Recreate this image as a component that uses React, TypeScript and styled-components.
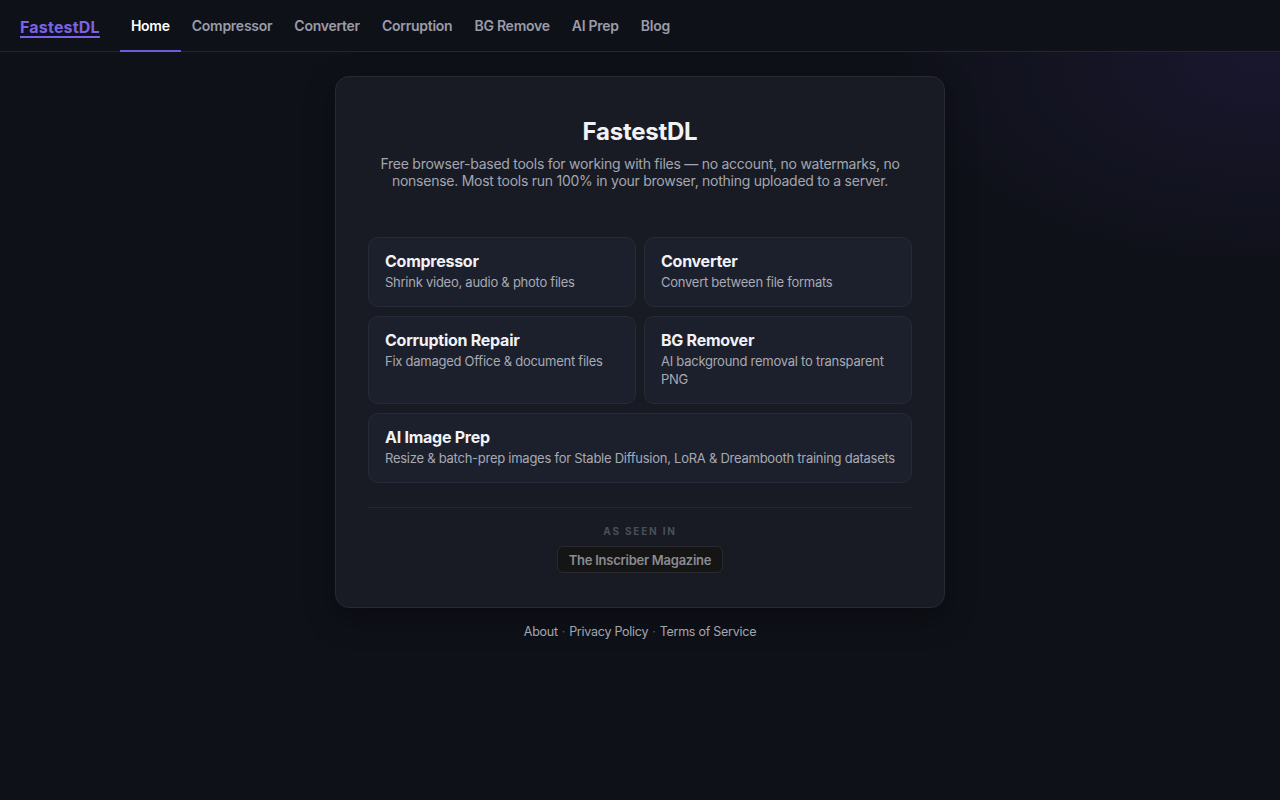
import styled, { createGlobalStyle } from "styled-components";

const GlobalStyle = createGlobalStyle`
  html, body {
    margin: 0;
    padding: 0;
    background: #0f1119;
  }

  body {
    font-family: Inter, "Noto Sans", "Liberation Sans", sans-serif;
    letter-spacing: -0.016em;
    color: #e8eaf0;
    -webkit-font-smoothing: antialiased;
  }

  * {
    box-sizing: border-box;
  }
`;

const tools = [
  { name: "Compressor", desc: "Shrink video, audio & photo files" },
  { name: "Converter", desc: "Convert between file formats" },
  { name: "Corruption Repair", desc: "Fix damaged Office & document files" },
  { name: "BG Remover", desc: "AI background removal to transparent PNG" },
  {
    name: "AI Image Prep",
    desc: "Resize & batch-prep images for Stable Diffusion, LoRA & Dreambooth training datasets",
    wide: true,
  },
];

const navLinks = ["Home", "Compressor", "Converter", "Corruption", "BG Remove", "AI Prep", "Blog"];

const App = () => {
  return (
    <Page>
      <GlobalStyle />
      <Nav>
        <Logo href="#">FastestDL</Logo>
        <NavList>
          {navLinks.map((link, idx) => (
            <NavLink key={link} href="#" $active={idx === 0}>
              {link}
            </NavLink>
          ))}
        </NavList>
      </Nav>

      <Main>
        <Card>
          <Header>
            <Title>FastestDL</Title>
            <Subtitle>
              Free browser-based tools for working with files — no account, no watermarks, no
              nonsense. Most tools run 100% in your browser, nothing uploaded to a server.
            </Subtitle>
          </Header>

          <ToolGrid>
            {tools.map((tool) => (
              <ToolTile key={tool.name} href="#" $wide={!!tool.wide}>
                <ToolName>{tool.name}</ToolName>
                <ToolDesc>{tool.desc}</ToolDesc>
              </ToolTile>
            ))}
          </ToolGrid>

          <Press>
            <PressLabel>As seen in</PressLabel>
            <PressBadge href="#">The Inscriber Magazine</PressBadge>
          </Press>
        </Card>

        <Footer>
          <FooterLink href="#">About</FooterLink>
          <Dot>·</Dot>
          <FooterLink href="#">Privacy Policy</FooterLink>
          <Dot>·</Dot>
          <FooterLink href="#">Terms of Service</FooterLink>
        </Footer>
      </Main>
    </Page>
  );
};

export default App;

const Page = styled.div`
  min-height: 800px;
  background:
    radial-gradient(ellipse 520px 300px at 1260px 60px, rgba(70, 50, 140, 0.18), transparent 70%),
    #0f1119;
`;

const Nav = styled.nav`
  height: 52px;
  display: flex;
  align-items: stretch;
  padding: 0 20px;
  gap: 20px;
  border-bottom: 1px solid #232633;
  background: #0f1119;
`;

const Logo = styled.a`
  display: flex;
  align-items: center;
  padding-top: 2px;
  font-size: 16px;
  font-weight: 700;
  color: #7b63e6;
  text-decoration: underline;
  text-underline-offset: 3px;
  text-decoration-thickness: 1.5px;
  letter-spacing: 0.2px;
`;

const NavList = styled.div`
  display: flex;
  align-items: stretch;
`;

const NavLink = styled.a<{ $active: boolean }>`
  display: flex;
  align-items: center;
  padding: 0 11px;
  font-size: 14px;
  font-weight: 600;
  text-decoration: none;
  color: ${({ $active }) => ($active ? "#ffffff" : "#9a9ca8")};
  border-bottom: 2px solid ${({ $active }) => ($active ? "#6a5fd6" : "transparent")};
  margin-bottom: -1px;
`;

const Main = styled.main`
  display: flex;
  flex-direction: column;
  align-items: center;
  padding-top: 24px;
`;

const Card = styled.section`
  width: 610px;
  padding: 40px 32px 34px;
  border-radius: 14px;
  background: #181b24;
  border: 1px solid #262a35;
  box-shadow: 0 10px 30px rgba(0, 0, 0, 0.35);
`;

const Header = styled.header`
  display: flex;
  flex-direction: column;
  align-items: center;
  gap: 8px;
  margin-bottom: 48px;
`;

const Title = styled.h1`
  margin: 0;
  font-size: 24px;
  line-height: 30px;
  font-weight: 700;
  color: #f1f2f6;
`;

const Subtitle = styled.p`
  margin: 0;
  font-size: 14px;
  line-height: 17px;
  text-align: center;
  color: #a3a6b0;
`;

const ToolGrid = styled.div`
  display: grid;
  grid-template-columns: 1fr 1fr;
  column-gap: 8px;
  row-gap: 9px;
`;

const ToolTile = styled.a<{ $wide: boolean }>`
  grid-column: ${({ $wide }) => ($wide ? "1 / span 2" : "auto")};
  display: flex;
  flex-direction: column;
  gap: 2px;
  padding: 13px 16px 15px;
  border-radius: 10px;
  background: #1c202c;
  border: 1px solid #262b38;
  text-decoration: none;
`;

const ToolName = styled.span`
  font-size: 16px;
  line-height: 20px;
  font-weight: 700;
  color: #f1f2f6;
`;

const ToolDesc = styled.span`
  font-size: 13px;
  line-height: 18px;
  color: #a7aab4;
`;

const Press = styled.div`
  margin-top: 24px;
  padding-top: 16px;
  border-top: 1px solid #242833;
  display: flex;
  flex-direction: column;
  align-items: center;
  gap: 8px;
`;

const PressLabel = styled.span`
  font-size: 10px;
  line-height: 14px;
  font-weight: 700;
  letter-spacing: 1.8px;
  text-transform: uppercase;
  color: #4b4f5b;
`;

const PressBadge = styled.a`
  display: flex;
  align-items: center;
  height: 27px;
  padding: 0 11px;
  border-radius: 6px;
  background: #151515;
  border: 1px solid #2a2b2e;
  font-size: 13px;
  font-weight: 600;
  color: #8a8b8f;
  text-decoration: none;
`;

const Footer = styled.footer`
  display: flex;
  align-items: center;
  gap: 4px;
  margin-top: 15px;
  font-size: 12.5px;
  line-height: 18px;
`;

const FooterLink = styled.a`
  color: #a3a6b0;
  text-decoration: none;
`;

const Dot = styled.span`
  color: #555966;
`;
